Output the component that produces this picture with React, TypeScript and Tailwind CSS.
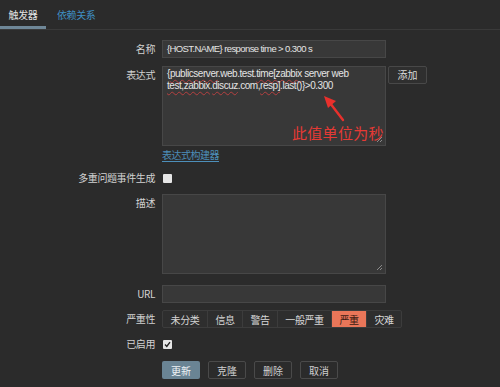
import React from 'react';

const cjk = "font-['Noto_Sans_CJK_SC',sans-serif]";
const latin = "font-['Liberation_Sans','Noto_Sans_CJK_SC',sans-serif]";

function Grip() {
  return (
    <svg className="absolute right-[2px] bottom-[2px]" width="7" height="7" viewBox="0 0 7 7">
      <path d="M6 1 L1 6 M6 4 L4 6" stroke="#8a8a8a" strokeWidth="1" />
    </svg>
  );
}

function Row({ label, className = '', children }: { label?: string; className?: string; children: React.ReactNode }) {
  return (
    <div className={`flex items-start gap-[7px] ${className}`}>
      <div className={`w-[155px] shrink-0 h-[18px] text-right text-[10px] tracking-[-0.4px] text-[#d2d2d2] leading-[18px] ${cjk}`}>{label}</div>
      {children}
    </div>
  );
}

const squiggle = 'underline decoration-wavy decoration-[#b54040] decoration-1 underline-offset-2';

export default function App() {
  const levels = ['未分类', '信息', '警告', '一般严重', '严重', '灾难'];
  const widths = ['w-[44px]', 'w-[35px]', 'w-[35px]', 'w-[54px]', 'w-[35px]', 'w-[35px]'];
  return (
    <div className="w-[500px] h-[387px] bg-[#2b2b2b] overflow-hidden">
      <div className={`flex h-[30px] border-b border-[#3a3a3a] text-[10px] tracking-[-0.4px] ${cjk}`}>
        <div className="w-[46px] flex items-center justify-center text-[#e2e2e2] border-b-[3px] border-[#6f8797] pt-[2px]">触发器</div>
        <div className="ml-[11px] flex items-center text-[#3f8fc2] pb-[1px]">依赖关系</div>
      </div>

      <Row label="名称" className="mt-[10px]">
        <div className={`w-[224px] h-[18px] bg-[#383838] border border-[#474747] px-[4px] text-[9.5px] tracking-[-0.6px] leading-[16px] text-[#e4e4e4] whitespace-nowrap ${latin}`}>
          {'{HOST.NAME} response time > 0.300 s'}
        </div>
      </Row>

      <Row label="表达式" className="mt-[8px]">
        <div className="flex items-start gap-[2px]">
          <div className={`relative w-[224px] h-[80px] bg-[#383838] border border-[#474747] px-[4px] pt-[1px] text-[10px] tracking-[-0.45px] leading-[12px] text-[#e4e4e4] whitespace-nowrap ${latin}`}>
            <div>
              {'{'}<span className={squiggle}>publicserver</span>.web.test.<span className={squiggle}>time[zabbix</span> server web
            </div>
            <div>
              <span className={squiggle}>test,zabbix</span>.<span className={squiggle}>discuz</span>.com,<span className={squiggle}>resp]</span>{'.last()}>0.300'}
            </div>
            <svg className="absolute left-[158px] top-[28px]" width="26" height="28" viewBox="0 0 26 28">
              <path d="M22 25 L9 8" stroke="#e8302c" strokeWidth="2.4" strokeLinecap="round" />
              <path d="M3 1 L15 6 L7 13 Z" fill="#e8302c" />
            </svg>
            <div className={`absolute left-[129px] top-[57px] text-[15px] tracking-[0.3px] leading-[18px] text-[#e53a35] ${cjk}`}>此值单位为秒</div>
            <Grip />
          </div>
          <button className={`h-[18px] w-[39px] bg-[#2f2f2f] border border-[#484848] rounded-[2px] text-[10px] text-[#dcdcdc] leading-[16px] ${cjk}`}>添加</button>
        </div>
      </Row>

      <div className={`mt-[2px] ml-[162px] h-[13px] text-[10px] tracking-[-0.5px] leading-[13px] ${cjk}`}>
        <span className="text-[#4d8fba] underline decoration-[#4d8fba] underline-offset-2">表达式构建器</span>
      </div>

      <Row label="多重问题事件生成" className="mt-[8px]">
        <div className="h-[18px] flex items-center">
          <div className="w-[9px] h-[9px] bg-[#e6e6e6] rounded-[1px] ml-[1px]" />
        </div>
      </Row>

      <Row label="描述" className="mt-[7px]">
        <div className="relative w-[224px] h-[80px] bg-[#383838] border border-[#474747]">
          <Grip />
        </div>
      </Row>

      <Row label="URL" className="mt-[11px]">
        <div className="w-[224px] h-[18px] bg-[#383838] border border-[#474747]" />
      </Row>

      <Row label="严重性" className="mt-[7px]">
        <div className={`flex h-[18px] border border-[#3c3c3c] rounded-[2px] bg-[#2e2e2e] text-[10px] tracking-[-0.4px] ${cjk}`}>
          {levels.map((l, i) => (
            <div
              key={l}
              className={`${widths[i]} flex items-center justify-center ${i > 0 ? 'border-l border-[#3c3c3c]' : ''} ${l === '严重' ? 'bg-[#e97659] text-[#3a1a12]' : 'text-[#d6d6d6]'}`}
            >
              {l}
            </div>
          ))}
        </div>
      </Row>

      <Row label="已启用" className="mt-[7px]">
        <div className="h-[18px] flex items-center">
          <div className="w-[9px] h-[9px] bg-[#e6e6e6] rounded-[1px] ml-[1px] flex items-center justify-center">
            <svg width="7" height="7" viewBox="0 0 7 7">
              <path d="M1 3.6 L2.8 5.4 L6 1.2" stroke="#222" strokeWidth="1.4" fill="none" />
            </svg>
          </div>
        </div>
      </Row>

      <div className={`mt-[8px] ml-[162px] flex gap-[8px] text-[10px] ${cjk}`}>
        <button className="w-[38px] h-[18px] bg-[#6a8494] rounded-[2px] text-[#eef2f4]">更新</button>
        <button className="w-[38px] h-[18px] border border-[#4a4a4a] rounded-[2px] text-[#cfcfcf]">克隆</button>
        <button className="w-[38px] h-[18px] border border-[#4a4a4a] rounded-[2px] text-[#cfcfcf]">删除</button>
        <button className="w-[38px] h-[18px] border border-[#4a4a4a] rounded-[2px] text-[#cfcfcf]">取消</button>
      </div>
    </div>
  );
}
